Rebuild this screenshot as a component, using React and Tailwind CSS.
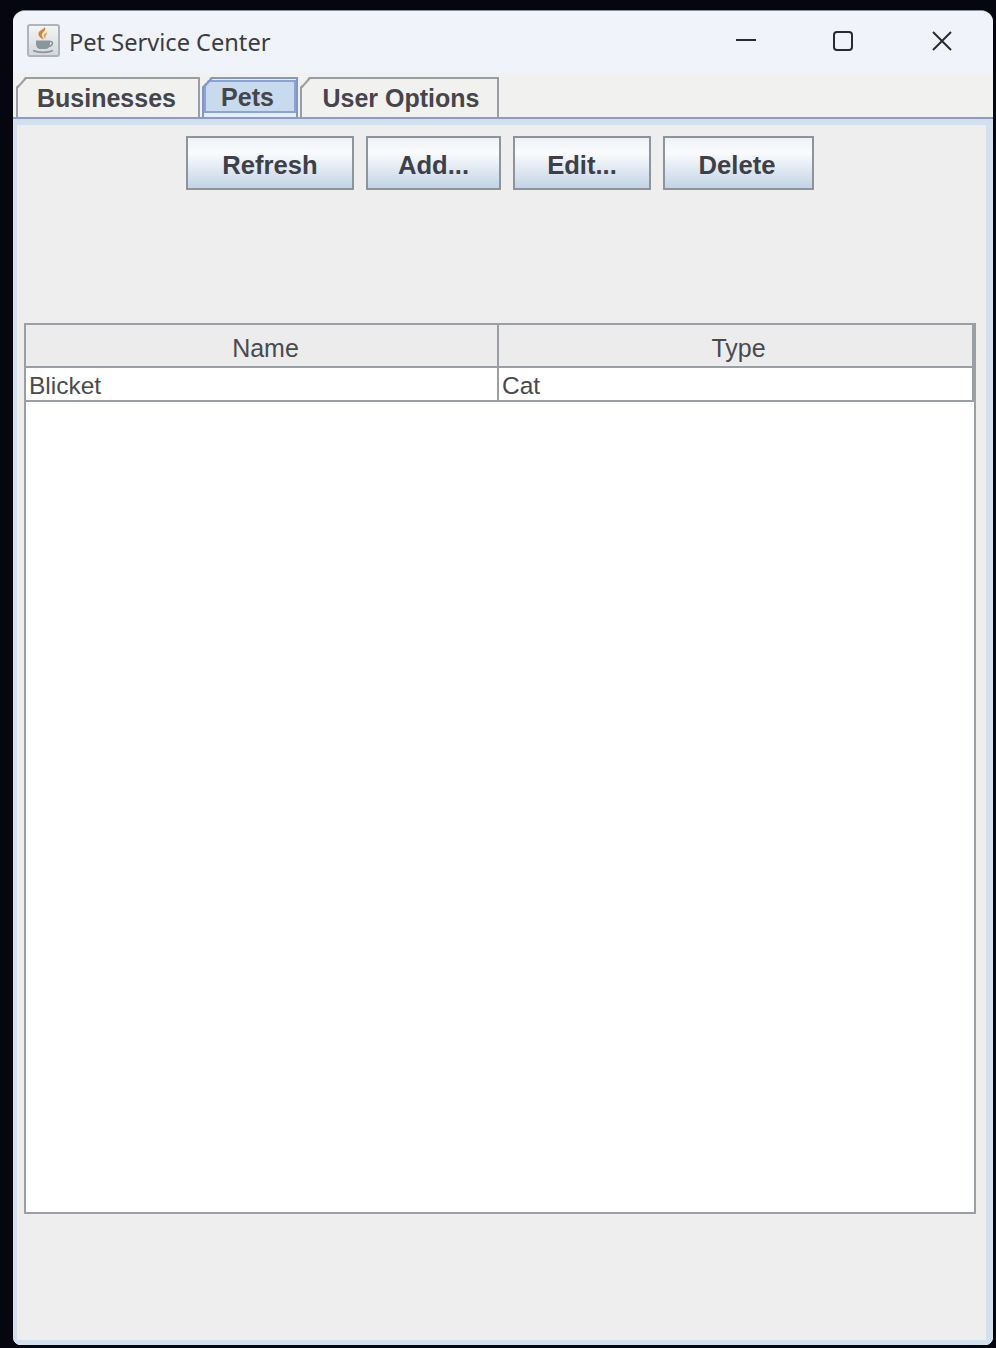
import React from 'react'

const JavaIcon = () => (
  <div className="w-[33px] h-[33px] rounded-[3px] border-2 border-[#aeb4ba] bg-gradient-to-b from-[#f4f4f4] to-[#d4d8dc] flex items-center justify-center">
    <svg width="27" height="27" viewBox="0 0 27 27" fill="none">
      <path d="M15 0c1 3-1 4-2.500 6-1.200 1.700-1 3.500 1.500 6.500-3.500-1-6-3.500-5.500-6.500C9 3.500 13 3 15 0z" fill="#d9812f" />
      <path d="M17 5c.8 2.500-2.500 3.500-1.500 7-2-1.500-2.500-3.500-1-5 .8-.8 1.800-1 2.500-2z" fill="#e2a05c" />
      <path d="M6 13.500h14v3.500c0 3-2.200 5-4.500 5h-5C8.200 22 6 20 6 17z" fill="#8b959c" />
      <path d="M20 14.500c3.500-.5 3.500 4-1 5" stroke="#8b959c" strokeWidth="1.500" />
      <path d="M3 23.500c5 2.500 15 2.500 20 0" stroke="#8b959c" strokeWidth="1.800" />
    </svg>
  </div>
)

const Tab = ({ label, width }) => (
  <div className={`relative h-[40px] ${width} border-t-2 border-l-2 border-r-2 border-[#9a9da3] bg-[#f1f1ef] [clip-path:polygon(9px_0,100%_0,100%_100%,0_100%,0_10px)] flex items-center justify-center pt-[2px] text-[25px] font-bold text-[#45454b]`}>
    <svg className="absolute -left-[2px] -top-[2px]" width="12" height="12" viewBox="0 0 12 12" fill="none">
      <path d="M1 11L10 1" stroke="#9a9da3" strokeWidth="2" />
    </svg>
    {label}
  </div>
)

const SelectedTab = ({ label, width }) => (
  <div className={`relative h-[40px] ${width} border-t-2 border-l-2 border-r-2 border-[#8496c8] bg-[#e6eef7] [clip-path:polygon(9px_0,100%_0,100%_100%,0_100%,0_10px)] pt-[1px]`}>
    <svg className="absolute -left-[2px] -top-[2px]" width="12" height="12" viewBox="0 0 12 12" fill="none">
      <path d="M1 11L10 1" stroke="#8496c8" strokeWidth="2" />
    </svg>
    <div className="h-[33px] border-2 border-[#8ba3d3] bg-[#c8daee] flex items-center justify-center pt-[3px] pr-[5px] text-[25px] font-bold text-[#45454b]">
      {label}
    </div>
  </div>
)

const ToolButton = ({ label, width }) => (
  <button className={`h-[54px] ${width} border-2 border-[#8d949c] bg-gradient-to-b from-[#eef2f7] via-[#fafbfd] via-30% to-[#c3d4e6] text-[25.6px] font-bold text-[#3e4048] flex items-center justify-center pt-[5px]`}>
    {label}
  </button>
)

export default function App() {
  return (
    <div className="h-[1348px] w-[996px] bg-[#05060f] pt-[10px] pl-[13px] pr-[3px] pb-[3px] font-['Liberation_Sans',Arial,sans-serif]">
      <div className="h-full flex flex-col rounded-t-[12px] rounded-b-[8px] overflow-hidden border-t border-[#8b8f99] bg-[#eeeeee]">
        {/* title bar */}
        <div className="h-[62px] shrink-0 bg-[#f0f3f9] flex items-center pl-[14px] pb-[4px]">
          <JavaIcon />
          <span className="ml-[9px] mt-[5px] text-[23.6px] text-[#3c3c40] font-['Noto_Sans',sans-serif]">Pet Service Center</span>
          <div className="ml-auto flex mt-[2px]">
            <div className="w-[99px] h-[40px] flex items-center justify-center">
              <svg width="20" height="20" viewBox="0 0 20 20" fill="none"><path d="M0 9h20" stroke="#2a2a2e" strokeWidth="2" /></svg>
            </div>
            <div className="w-[99px] h-[40px] flex items-center justify-center pr-[4px]">
              <svg width="20" height="20" viewBox="0 0 20 20" fill="none"><rect x="1" y="1" width="18" height="18" rx="3" stroke="#2a2a2e" strokeWidth="2" /></svg>
            </div>
            <div className="w-[99px] h-[40px] flex items-center justify-center pr-[4px]">
              <svg width="20" height="20" viewBox="0 0 20 20" fill="none"><path d="M1 1l18 18M19 1L1 19" stroke="#2a2a2e" strokeWidth="2" /></svg>
            </div>
          </div>
        </div>

        {/* tab strip */}
        <div className="h-[46px] shrink-0 bg-[#f1f1ef] border-b-2 border-[#8c9bca] flex items-end pl-[3px] gap-[2px]">
          <Tab label="Businesses" width="w-[184px] pr-[3px]" />
          <SelectedTab label="Pets" width="w-[96px]" />
          <Tab label="User Options" width="w-[199px] pl-[3px]" />
        </div>

        {/* tab content */}
        <div className="flex-1 min-h-0 border-t-[6px] border-l-[4px] border-r-[7px] border-b-[5px] border-[#d3e0ee] bg-[#eeeeee] pt-[11px] pl-[7px] pr-[10px] pb-[126px] flex flex-col">
          <div className="flex gap-[12px] pl-[162px] shrink-0">
            <ToolButton label="Refresh" width="w-[168px]" />
            <ToolButton label="Add..." width="w-[135px]" />
            <ToolButton label="Edit..." width="w-[138px]" />
            <ToolButton label="Delete" width="w-[151px] pr-[3px]" />
          </div>

          <div className="mt-[133px] flex-1 min-h-0 border-2 border-[#9a9fa5] bg-white text-[25px] text-[#4a4a4e]">
            <div className="flex h-[43px] bg-[#ececec] border-b-2 border-[#9a9fa5]">
              <div className="w-[474px] border-r-2 border-[#9a9fa5] flex items-center justify-center pt-[7px] pl-[8px]">Name</div>
              <div className="w-[476px] border-r-2 border-[#9a9fa5] flex items-center justify-center pt-[7px] pl-[6px]">Type</div>
            </div>
            <div className="flex h-[34px] border-b-2 border-[#9a9fa5] text-[24.5px]">
              <div className="w-[474px] border-r-2 border-[#9a9fa5] pl-[3px] leading-[36px]">Blicket</div>
              <div className="w-[476px] border-r-2 border-[#9a9fa5] pl-[3px] leading-[36px]">Cat</div>
            </div>
          </div>
        </div>
      </div>
    </div>
  )
}
